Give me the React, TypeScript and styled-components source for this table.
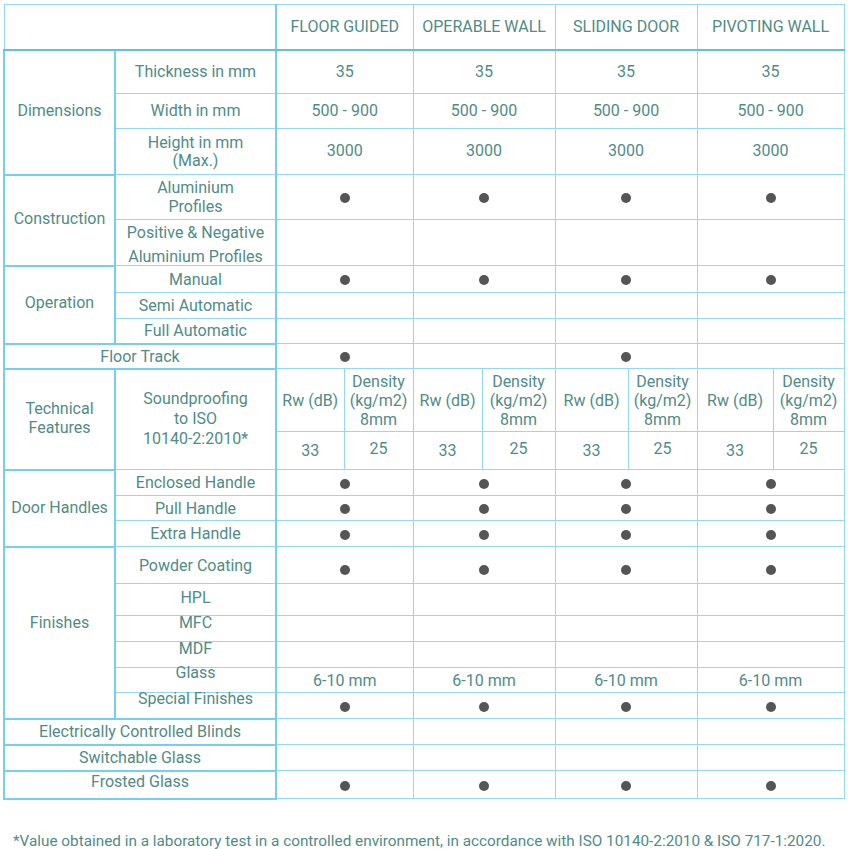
import React from "react";
import styled, { createGlobalStyle, css } from "styled-components";

const GlobalStyle = createGlobalStyle`
  body {
    margin: 0;
    background: #ffffff;
    font-family: Roboto, "Liberation Sans", Arial, sans-serif;
    color: #4f8c88;
  }
`;

const Page = styled.div`
  padding: 4px 0 0 3px;
  width: 840px;
`;

const Table = styled.table`
  width: 840px;
  table-layout: fixed;
  border-collapse: collapse;
  font-size: 16px;
  line-height: 19px;
  border: 1px solid #8fdaf6;
`;

const Row = styled.tr<{ $h: number }>`
  height: ${(p) => p.$h}px;
`;

const Head = styled.th`
  font-weight: 400;
  font-size: 16px;
  text-transform: uppercase;
  text-align: center;
  vertical-align: middle;
  padding: 0;
  border: 1px solid #8fdaf6;
  border-bottom: 2px solid #5cc0ea;
`;

const Blank = styled(Head)`
  border-right: 2px solid #72d0f4;
`;

// $top: pin the text to the top of the cell, with that padding (px)
// $bottom: extra room under centred text, to lift it
// $lh: line height when it differs from the table's
type Place = { $top?: number; $bottom?: number; $lh?: number };

const placed = css<Place>`
  vertical-align: ${(p) => (p.$top !== undefined ? "top" : "middle")};
  padding-top: ${(p) => p.$top ?? 0}px;
  padding-bottom: ${(p) => p.$bottom ?? 0}px;
  line-height: ${(p) => p.$lh ?? 19}px;
`;

const Group = styled.td<Place>`
  text-align: center;
  padding-left: 4px;
  padding-right: 4px;
  border: 2px solid #72d0f4;
  ${placed}
`;

const Label = styled.td<Place>`
  text-align: center;
  padding-left: 0;
  padding-right: 0;
  border: 1px solid #8fdaf6;
  border-left: 2px solid #72d0f4;
  border-right: 2px solid #72d0f4;
  ${placed}
`;

// two lines set wider than the row allows; keeps the row at its height
const TallLines = styled.div`
  height: 44px;
  padding-top: 1px;
  line-height: 24px;
  overflow: visible;
  white-space: nowrap;
`;

const Cell = styled.td<Place>`
  text-align: center;
  padding-left: 0;
  padding-right: 0;
  border: 1px solid #8fdaf6;
  white-space: nowrap;
  ${placed}
`;

const Dot = styled.span`
  display: inline-block;
  width: 10px;
  height: 10px;
  border-radius: 50%;
  background: #555555;
  vertical-align: middle;
`;

const Note = styled.p`
  margin: 32px 0 0 10px;
  font-size: 15.3px;
  line-height: 18px;
  color: #4f8c88;
  white-space: nowrap;
`;

const products = ["Floor Guided", "Operable Wall", "Sliding Door", "Pivoting Wall"];
const widths = [111, 161, 68, 69, 69, 73, 73, 69, 76, 71];

type Value = "dot" | "" | string;

function Values({ items, top }: { items: Value[]; top?: number }) {
  return (
    <>
      {items.map((v, i) => (
        <Cell key={i} colSpan={2} $top={top}>
          {v === "dot" ? <Dot /> : v}
        </Cell>
      ))}
    </>
  );
}

const all = (v: Value): Value[] => [v, v, v, v];

export default function App() {
  return (
    <Page>
      <GlobalStyle />
      <Table>
        <colgroup>
          {widths.map((w, i) => (
            <col key={i} style={{ width: w }} />
          ))}
        </colgroup>
        <thead>
          <Row $h={45}>
            <Blank colSpan={2} />
            {products.map((p) => (
              <Head key={p} colSpan={2}>
                {p}
              </Head>
            ))}
          </Row>
        </thead>
        <tbody>
          <Row $h={44}>
            <Group rowSpan={3} $bottom={3}>
              Dimensions
            </Group>
            <Label>Thickness in mm</Label>
            <Values items={all("35")} />
          </Row>
          <Row $h={35}>
            <Label $top={7}>Width in mm</Label>
            <Values items={all("500 - 900")} top={7} />
          </Row>
          <Row $h={46}>
            <Label $lh={18} $top={5}>
              Height in mm
              <br />
              (Max.)
            </Label>
            <Values items={all("3000")} top={12} />
          </Row>

          <Row $h={45}>
            <Group rowSpan={2} $bottom={4}>
              Construction
            </Group>
            <Label>
              Aluminium
              <br />
              Profiles
            </Label>
            <Values items={all("dot")} />
          </Row>
          <Row $h={45}>
            <Label $top={0}>
              <TallLines>
                Positive &amp; Negative
                <br />
                Aluminium Profiles
              </TallLines>
            </Label>
            <Values items={all("")} />
          </Row>

          <Row $h={27}>
            <Group rowSpan={3} $bottom={4}>
              Operation
            </Group>
            <Label>Manual</Label>
            <Values items={all("dot")} />
          </Row>
          <Row $h={26}>
            <Label>Semi Automatic</Label>
            <Values items={all("")} />
          </Row>
          <Row $h={25}>
            <Label>Full Automatic</Label>
            <Values items={all("")} />
          </Row>

          <Row $h={25}>
            <Group colSpan={2}>Floor Track</Group>
            <Values items={["dot", "", "dot", ""]} />
          </Row>

          <Row $h={63}>
            <Group rowSpan={2} $bottom={2}>
              Technical
              <br />
              Features
            </Group>
            <Label rowSpan={2} $lh={20}>
              Soundproofing
              <br />
              to ISO
              <br />
              10140-2:2010*
            </Label>
            {products.map((p) => (
              <React.Fragment key={p}>
                <Cell>Rw (dB)</Cell>
                <Cell>
                  Density
                  <br />
                  (kg/m2)
                  <br />
                  8mm
                </Cell>
              </React.Fragment>
            ))}
          </Row>
          <Row $h={38}>
            {products.map((p) => (
              <React.Fragment key={p}>
                <Cell $top={9}>33</Cell>
                <Cell $top={7}>25</Cell>
              </React.Fragment>
            ))}
          </Row>

          <Row $h={26}>
            <Group rowSpan={3} $bottom={2}>
              Door Handles
            </Group>
            <Label>Enclosed Handle</Label>
            <Values items={all("dot")} />
          </Row>
          <Row $h={25}>
            <Label>Pull Handle</Label>
            <Values items={all("dot")} />
          </Row>
          <Row $h={26}>
            <Label>Extra Handle</Label>
            <Values items={all("dot")} />
          </Row>

          <Row $h={37}>
            <Group rowSpan={6} $bottom={20}>
              Finishes
            </Group>
            <Label>Powder Coating</Label>
            <Values items={all("dot")} top={12} />
          </Row>
          <Row $h={32}>
            <Label $top={4}>HPL</Label>
            <Values items={all("")} />
          </Row>
          <Row $h={26}>
            <Label $top={0} $lh={14}>
              MFC
            </Label>
            <Values items={all("")} />
          </Row>
          <Row $h={26}>
            <Label $top={0} $lh={14}>
              MDF
            </Label>
            <Values items={all("")} />
          </Row>
          <Row $h={25}>
            <Label $top={0} $lh={10}>
              Glass
            </Label>
            <Values items={all("6-10 mm")} />
          </Row>
          <Row $h={26}>
            <Label $top={0} $lh={12}>
              Special Finishes
            </Label>
            <Values items={all("dot")} />
          </Row>

          <Row $h={26}>
            <Group colSpan={2}>Electrically Controlled Blinds</Group>
            <Values items={all("")} />
          </Row>
          <Row $h={26}>
            <Group colSpan={2}>Switchable Glass</Group>
            <Values items={all("")} />
          </Row>
          <Row $h={28}>
            <Group colSpan={2} $top={0} $lh={20}>
              Frosted Glass
            </Group>
            <Values items={all("dot")} />
          </Row>
        </tbody>
      </Table>
      <Note>
        *Value obtained in a laboratory test in a controlled environment, in accordance with ISO
        10140-2:2010 &amp; ISO 717-1:2020.
      </Note>
    </Page>
  );
}
